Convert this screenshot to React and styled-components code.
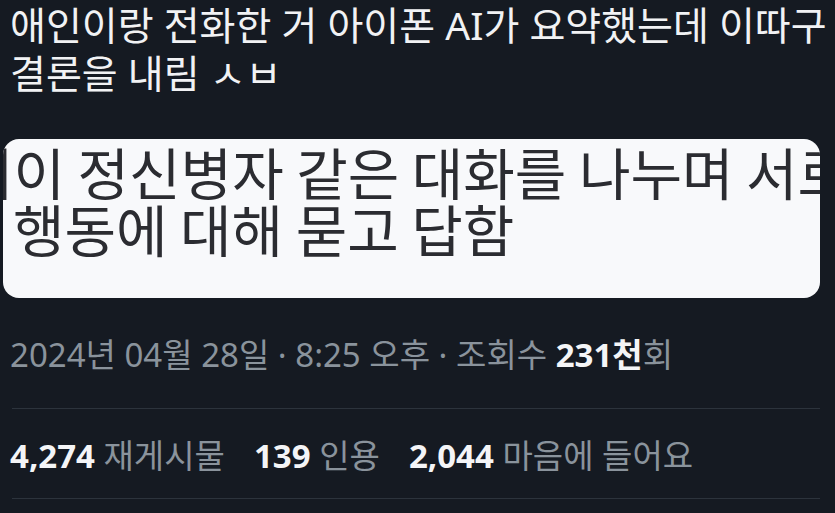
import React from "react";
import styled, { createGlobalStyle } from "styled-components";

const GlobalStyle = createGlobalStyle`
  html, body {
    margin: 0;
    padding: 0;
    background: #151a22;
  }
  body {
    font-family: "Noto Sans", "Noto Sans CJK KR", sans-serif;
    overflow: hidden;
  }
`;

function App() {
  return (
    <Page>
      <GlobalStyle />
      <Title>
        애인이랑 전화한 거 아이폰 AI가 요약했는데 이따구
        <br />
        결론을 내림 ㅅㅂ
      </Title>
      <Card>
        <CardLine clipped>거이 정신병자 같은 대화를 나누며 서로</CardLine>
        <CardLine>행동에 대해 묻고 답함</CardLine>
      </Card>
      <Meta>
        2024년 04월 28일 · 8:25 오후 · 조회수 <Strong>231천</Strong>회
      </Meta>
      <Divider />
      <Stats>
        <Stat>
          <Strong>4,274</Strong> 재게시물
        </Stat>
        <Stat>
          <Strong>139</Strong> 인용
        </Stat>
        <Stat>
          <Strong>2,044</Strong> 마음에 들어요
        </Stat>
      </Stats>
      <Divider last />
    </Page>
  );
}

export default App;

const Page = styled.div`
  width: 835px;
  height: 513px;
  background: #151a22;
  display: flex;
  flex-direction: column;
`;

const Title = styled.div`
  padding: 1px 10px 0;
  font-size: 39px;
  line-height: 48px;
  color: #f1f2f4;
  white-space: nowrap;
`;

const Card = styled.div`
  margin: 42px 15px 0 3px;
  padding: 3px 0 42px 10px;
  background: #f8f9fb;
  border-radius: 16px;
  overflow: hidden;
`;

const CardLine = styled.div`
  font-family: "Noto Sans CJK KR", sans-serif;
  font-size: 56px;
  line-height: 57px;
  color: #2b2c31;
  white-space: nowrap;
  margin-left: ${(props) => (props.clipped ? "-51px" : "0")};
`;

const Meta = styled.div`
  margin-top: 33px;
  padding: 0 10px;
  font-size: 33px;
  line-height: 47px;
  color: #8a939c;
  white-space: nowrap;
`;

const Strong = styled.span`
  color: #f4f5f7;
  font-weight: 700;
`;

const Divider = styled.div`
  height: 1px;
  background: #2c333c;
  margin: ${(props) => (props.last ? "19px" : "30px")} 15px 0 12px;
`;

const Stats = styled.div`
  margin-top: 23px;
  padding: 0 10px;
  display: flex;
  gap: 29px;
  font-size: 33px;
  line-height: 47px;
  color: #8a939c;
  white-space: nowrap;
`;

const Stat = styled.span``;
